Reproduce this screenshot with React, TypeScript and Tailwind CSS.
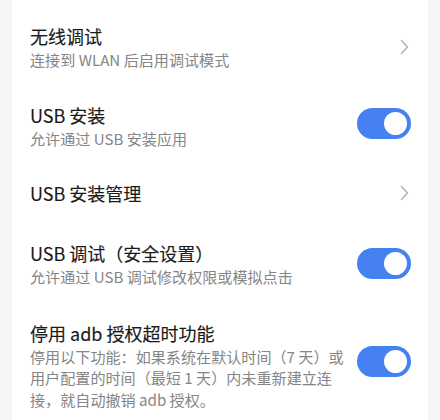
import React from "react";

type Row = {
	title: string;
	desc?: React.ReactNode;
	kind: "link" | "toggle";
	pad: string;
	knob?: string;
};

const rows: Row[] = [
	{ title: "无线调试", desc: "连接到 WLAN 后启用调试模式", kind: "link", pad: "py-[16px]" },
	{ title: "USB 安装", desc: "允许通过 USB 安装应用", kind: "toggle", pad: "py-[16px]", knob: "mb-[4px]" },
	{ title: "USB 安装管理", kind: "link", pad: "pt-[16px] pb-[20px]" },
	{ title: "USB 调试（安全设置）", desc: "允许通过 USB 调试修改权限或模拟点击", kind: "toggle", pad: "py-[16px]", knob: "mb-[1px]" },
	{
		title: "停用 adb 授权超时功能",
		desc: (
			<>
				停用以下功能：如果系统在默认时间（7 天）或
				<br />
				用户配置的时间（最短 1 天）内未重新建立连
				<br />
				接，就自动撤销 adb 授权。
			</>
		),
		kind: "toggle",
		pad: "pt-[17px] pb-[16px]",
		knob: "mb-[8px]",
	},
];

const Chevron = () => (
	<svg width="9" height="16" viewBox="0 0 9 16" fill="none" className="shrink-0 mr-[2px]">
		<polyline points="1.5,1.5 7.5,8 1.5,14.5" stroke="#b5b5b5" strokeWidth="1.6" strokeLinecap="round" strokeLinejoin="round" />
	</svg>
);

const Toggle = ({ className }: { className?: string }) => (
	<div className={`flex h-[31px] w-[54px] shrink-0 items-center justify-end rounded-full bg-[#4581f1] pr-[4px] ${className ?? ""}`}>
		<div className="h-[23px] w-[23px] rounded-full bg-white" />
	</div>
);

export default function App() {
	return (
		<div className="h-[420px] overflow-hidden bg-[#f6f6f6] px-[12px]" style={{ fontFamily: '"Noto Sans CJK SC", "Noto Sans", sans-serif' }}>
			<div className="h-full bg-white pt-[8px]">
				{rows.map((row, i) => (
					<div key={i} className={`flex items-center gap-[8px] pl-[18px] pr-[17px] ${row.pad}`}>
						<div className="min-w-0 flex-1">
							<div className="text-[18px] leading-[24px] font-normal text-[#1a1a1a] [-webkit-text-stroke:0.15px_#1a1a1a]">{row.title}</div>
							{row.desc ? <div className="mt-[1px] text-[15.1px] leading-[21.5px] text-[#858585]">{row.desc}</div> : null}
						</div>
						{row.kind === "toggle" ? <Toggle className={row.knob} /> : <Chevron />}
					</div>
				))}
			</div>
		</div>
	);
}
